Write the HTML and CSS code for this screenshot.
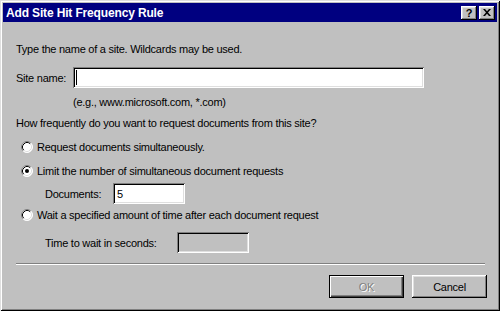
FILE: index.html
```html
<!DOCTYPE html>
<html>
<head>
<meta charset="utf-8">
<link rel="stylesheet" href="styles.css">
</head>
<body>
<div class="window">
  <div class="titlebar">
    <span class="title">Add Site Hit Frequency Rule</span>
    <div class="tb-buttons">
      <span class="tb-btn help">?</span>
      <span class="tb-btn close"><svg width="8" height="7" viewBox="0 0 8 7"><path d="M0 0h2l2 2.3L6 0h2L5 3.5 8 7H6L4 4.7 2 7H0l3-3.5z" fill="#000"/></svg></span>
    </div>
  </div>
  <div class="content">
    <p class="intro">Type the name of a site. Wildcards may be used.</p>
    <div class="field-row site-row">
      <span class="lbl site-lbl">Site name:</span>
      <div class="field site-field"><span class="caret"></span></div>
    </div>
    <p class="hint">(e.g., www.microsoft.com, *.com)</p>
    <p class="question">How frequently do you want to request documents from this site?</p>
    <div class="radio r1">
      <svg class="radio-icon" width="12" height="12" viewBox="0 0 12 12"><circle cx="6" cy="6" r="5.5" fill="#fff"/><path d="M2.11 9.89A5.5 5.5 0 0 1 9.89 2.11" stroke="#808080" fill="none"/><path d="M9.89 2.11A5.5 5.5 0 0 1 2.11 9.89" stroke="#fff" fill="none"/><path d="M2.82 9.18A4.5 4.5 0 0 1 9.18 2.82" stroke="#000" fill="none"/><path d="M9.18 2.82A4.5 4.5 0 0 1 2.82 9.18" stroke="#dfdfdf" fill="none"/></svg>
      <span>Request documents simultaneously.</span>
    </div>
    <div class="radio r2">
      <svg class="radio-icon" width="12" height="12" viewBox="0 0 12 12"><circle cx="6" cy="6" r="5.5" fill="#fff"/><path d="M2.11 9.89A5.5 5.5 0 0 1 9.89 2.11" stroke="#808080" fill="none"/><path d="M9.89 2.11A5.5 5.5 0 0 1 2.11 9.89" stroke="#fff" fill="none"/><path d="M2.82 9.18A4.5 4.5 0 0 1 9.18 2.82" stroke="#000" fill="none"/><path d="M9.18 2.82A4.5 4.5 0 0 1 2.82 9.18" stroke="#dfdfdf" fill="none"/><circle cx="6" cy="6" r="2" fill="#000"/></svg>
      <span>Limit the number of simultaneous document requests</span>
    </div>
    <div class="field-row sub docs-row">
      <span class="lbl docs-lbl">Documents:</span>
      <div class="field docs-field">5</div>
    </div>
    <div class="radio r3">
      <svg class="radio-icon" width="12" height="12" viewBox="0 0 12 12"><circle cx="6" cy="6" r="5.5" fill="#fff"/><path d="M2.11 9.89A5.5 5.5 0 0 1 9.89 2.11" stroke="#808080" fill="none"/><path d="M9.89 2.11A5.5 5.5 0 0 1 2.11 9.89" stroke="#fff" fill="none"/><path d="M2.82 9.18A4.5 4.5 0 0 1 9.18 2.82" stroke="#000" fill="none"/><path d="M9.18 2.82A4.5 4.5 0 0 1 2.82 9.18" stroke="#dfdfdf" fill="none"/></svg>
      <span>Wait a specified amount of time after each document request</span>
    </div>
    <div class="field-row sub wait-row">
      <span class="lbl wait-lbl">Time to wait in seconds:</span>
      <div class="field disabled wait-field"></div>
    </div>
    <div class="separator"></div>
    <div class="buttons">
      <button class="btn default" disabled>OK</button>
      <button class="btn">Cancel</button>
    </div>
  </div>
</div>
</body>
</html>
```
FILE: styles.css
```css
html, body {
  margin: 0;
  padding: 0;
}
body {
  width: 500px;
  height: 311px;
  overflow: hidden;
  background: #c0c0c0;
  font-family: "Liberation Sans", Arial, sans-serif;
  font-size: 11px;
  line-height: 14px;
  letter-spacing: -0.25px;
  color: #000;
}
.window {
  box-sizing: border-box;
  width: 500px;
  height: 311px;
  background: #c0c0c0;
  padding: 3px;
  display: flex;
  flex-direction: column;
  box-shadow: inset 1px 1px #dfdfdf, inset -1px -1px #000, inset 2px 2px #fff, inset -2px -2px #808080;
}
.titlebar {
  height: 19px;
  flex: none;
  background: #000080;
  color: #fff;
  display: flex;
  align-items: center;
  justify-content: space-between;
  padding: 0 2px 0 3px;
}
.title {
  font-weight: bold;
  font-size: 12px;
  letter-spacing: -0.15px;
}
.tb-buttons {
  display: flex;
  gap: 2px;
}
.tb-btn {
  width: 16px;
  height: 14px;
  box-sizing: border-box;
  background: #c0c0c0;
  color: #000;
  font-weight: bold;
  font-size: 11px;
  letter-spacing: 0;
  display: flex;
  align-items: center;
  justify-content: center;
  box-shadow: inset -1px -1px #000, inset 1px 1px #fff, inset -2px -2px #808080, inset 2px 2px #dfdfdf;
}
.content {
  flex: 1;
  display: flex;
  flex-direction: column;
  padding: 0 10px 0 13px;
}
p {
  margin: 0;
}
.intro {
  margin-top: 20px;
}
.field-row {
  display: flex;
  align-items: center;
}
.site-row {
  margin-top: 11px;
}
.site-lbl {
  width: 57px;
}
.field {
  height: 21px;
  box-sizing: border-box;
  background: #fff;
  display: flex;
  align-items: center;
  padding-left: 4px;
  box-shadow: inset 1px 1px #808080, inset -1px -1px #fff, inset 2px 2px #000, inset -2px -2px #dfdfdf;
}
.site-field {
  width: 351px;
  padding-left: 3px;
}
.caret {
  width: 1px;
  height: 15px;
  background: #000;
}
.hint {
  margin-top: 7px;
  padding-left: 57px;
}
.question {
  margin-top: 7px;
}
.radio {
  display: flex;
  align-items: center;
  gap: 4px;
  padding-left: 5px;
  height: 14px;
}
.radio-icon {
  flex: none;
}
.r1, .r2 {
  margin-top: 10px;
}
.r3 {
  margin-top: 4px;
}
.sub {
  padding-left: 29px;
}
.docs-row {
  margin-top: 5px;
}
.docs-lbl {
  width: 68px;
}
.docs-field {
  width: 72px;
}
.wait-row {
  margin-top: 10px;
}
.wait-lbl {
  width: 132px;
}
.wait-field {
  width: 72px;
}
.field.disabled {
  background: #c0c0c0;
}
.separator {
  margin-top: 10px;
  margin-right: 2px;
  height: 2px;
  box-sizing: border-box;
  border-top: 1px solid #808080;
  border-bottom: 1px solid #fff;
}
.buttons {
  margin-top: 10px;
  display: flex;
  justify-content: flex-end;
  gap: 8px;
}
.btn {
  width: 75px;
  height: 23px;
  padding: 0;
  border: 0;
  background: #c0c0c0;
  font-family: inherit;
  font-size: 11px;
  letter-spacing: -0.25px;
  color: #000;
  box-shadow: inset -1px -1px #000, inset 1px 1px #fff, inset -2px -2px #808080, inset 2px 2px #dfdfdf;
}
.btn.default {
  color: #808080;
  text-shadow: 1px 1px #fff;
  box-shadow: inset 0 0 0 1px #000, inset 2px 2px #fff, inset -2px -2px #404040, inset -3px -3px #808080;
}
```
